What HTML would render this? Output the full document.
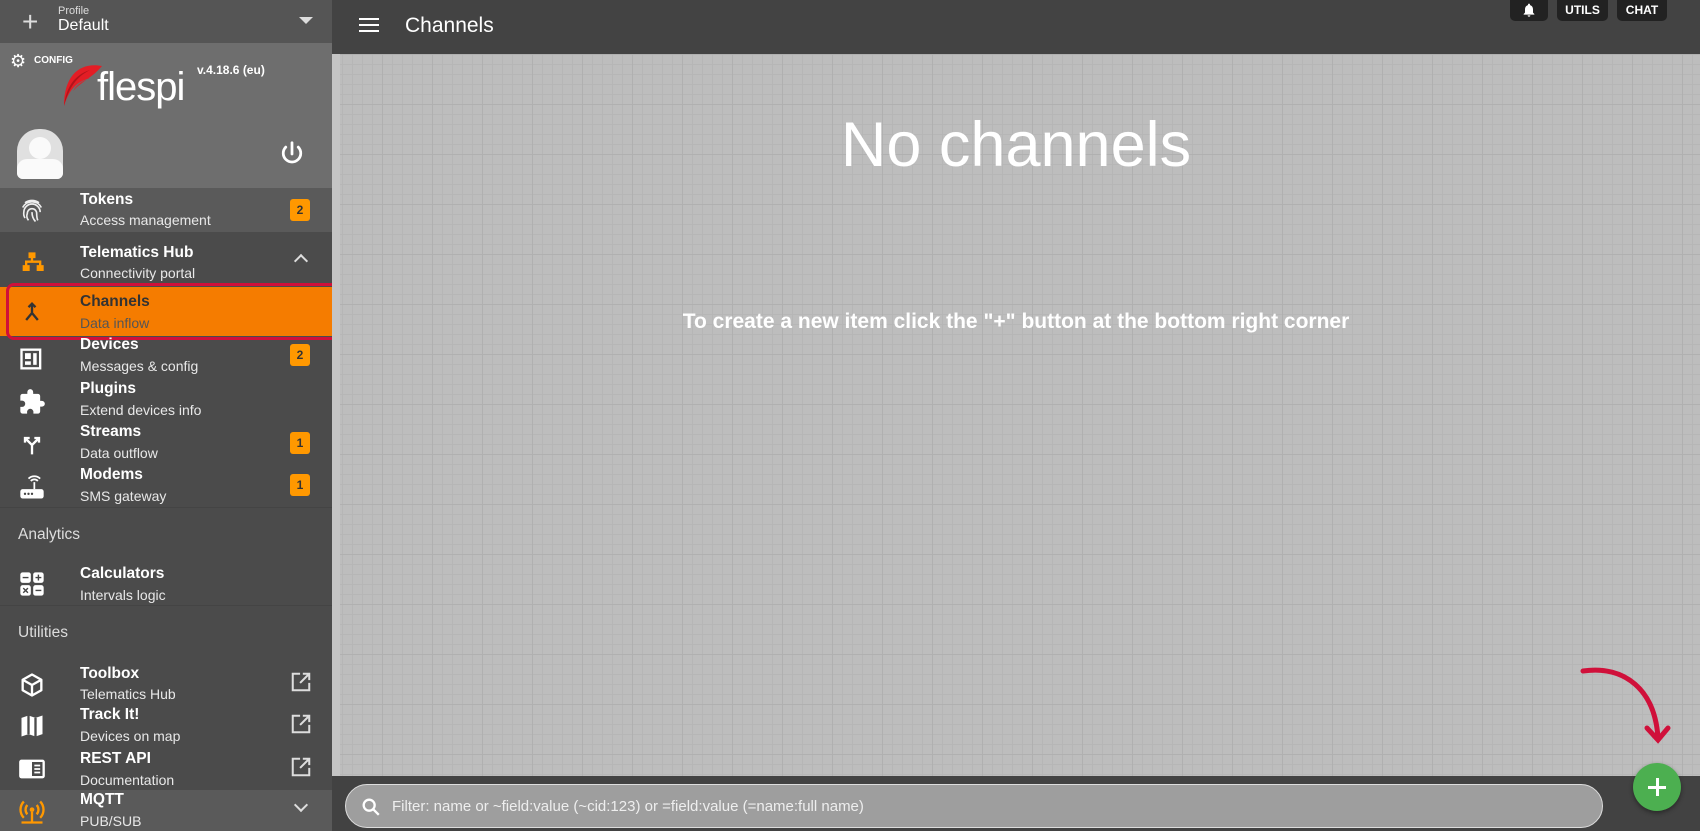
<!DOCTYPE html>
<html><head><meta charset="utf-8"><style>
*{box-sizing:border-box;margin:0;padding:0}
body{width:1700px;height:831px;overflow:hidden;font-family:"Liberation Sans",sans-serif;background:#bdbdbd;position:relative;color:#fff}
.side{position:absolute;left:0;top:0;width:332px;height:831px;background:#4b4b4b}
.scroll{position:absolute;left:332px;top:54px;width:8px;height:722px;background:#c4c4c4}
.main{position:absolute;left:332px;top:54px;width:1368px;height:722px;
background-color:#bdbdbd;
background-image:linear-gradient(#b0b0b0 1px,transparent 1px),linear-gradient(90deg,#b0b0b0 1px,transparent 1px),linear-gradient(#b6b6b6 1px,transparent 1px),linear-gradient(90deg,#b6b6b6 1px,transparent 1px);
background-size:50px 50px,50px 50px,10px 10px,10px 10px}
.top{position:absolute;left:332px;top:0;width:1368px;height:54px;background:#434343}
.row{position:absolute;left:0;width:332px}
.row .t{position:absolute;left:80px;font-weight:bold;font-size:15.5px}
.row .s{position:absolute;left:80px;font-size:14px;color:#e8e8e8}
.row .ic{position:absolute;left:18px;width:28px;height:28px}
.badge{position:absolute;left:290px;width:20px;height:22px;background:#ff9800;border-radius:3px;color:#333;font-size:12px;font-weight:bold;text-align:center;line-height:22px}
.hdr{position:absolute;left:18px;font-size:15.5px;color:#ddd}
.btn{position:absolute;top:0;height:21px;background:#222;border-radius:0 0 5px 5px;font-size:12px;font-weight:bold;text-align:center;line-height:20px}
</style></head><body>
<div class="side">
 <div style="position:absolute;left:0;top:0;width:332px;height:43px;background:#555">
  <div style="position:absolute;left:22px;top:6px;font-size:28px;color:#ddd;font-weight:300">+</div>
  <div style="position:absolute;left:58px;top:5px;font-size:11px;color:#ddd">Profile</div>
  <div style="position:absolute;left:58px;top:17px;font-size:16px">Default</div>
  <div style="position:absolute;left:299px;top:17px;border-left:7px solid transparent;border-right:7px solid transparent;border-top:7px solid #ddd"></div>
 </div>
 <div style="position:absolute;left:0;top:43px;width:332px;height:145px;background:#6e6e6e">
  <div style="position:absolute;left:10px;top:8px;font-size:18px">⚙</div>
  <div style="position:absolute;left:34px;top:12px;font-size:10px;font-weight:bold">CONFIG</div>
  <svg style="position:absolute;left:60px;top:20px" width="42" height="45" viewBox="0 0 42 45"><path d="M42 3C22-1 4 10 4 43 9 27 16 19 30 15 20 19 16 23 13 28 22 18 32 15 42 3Z" fill="#e31d25"/><path d="M4 43C6 25 14 12 30 7 16 14 9 25 4 43Z" fill="#b0141b"/></svg>
  <div style="position:absolute;left:97px;top:22px;font-size:40px;letter-spacing:-1px">flespi</div>
  <div style="position:absolute;left:197px;top:20px;font-size:12px;font-weight:bold">v.4.18.6 (eu)</div>
  <div style="position:absolute;left:17px;top:86px;width:46px;height:50px;border-radius:22px 22px 6px 6px;background:#e0e0e0;overflow:hidden">
   <div style="position:absolute;left:12px;top:8px;width:22px;height:22px;border-radius:50%;background:#fafafa"></div>
   <div style="position:absolute;left:0;top:30px;width:46px;height:20px;border-radius:10px 10px 4px 4px;background:#fafafa"></div></div>
  <svg style="position:absolute;left:277px;top:96px" width="30" height="30" viewBox="0 0 24 24"><path d="M12 3v9M7 6.5a7 7 0 1 0 10 0" stroke="#fff" stroke-width="2.2" fill="none" stroke-linecap="round"/></svg>
 </div>
 <div class="row" style="top:188px;height:44px;background:#5a5a5a">
  <svg class="ic" style="top:9px" viewBox="0 0 24 24" fill="none" stroke="#eee" stroke-width="1.4"><path d="M4 9a9 9 0 0 1 16 0M6 18a7 7 0 0 1-1-5 7 7 0 0 1 14 0M9 20a6 6 0 0 1-1-6 4 4 0 0 1 8 0c0 2 0 4 1 6M12 13c0 3 1 6 3 8M6 5a10 10 0 0 1 12 0"/></svg>
  <div class="t" style="top:3px">Tokens</div><div class="s" style="top:24px">Access management</div>
  <div class="badge" style="top:11px">2</div></div>
 <div class="row" style="top:232px;height:52px;background:#4b4b4b">
  <svg class="ic" style="top:18px" viewBox="0 0 24 24"><path d="M9 2h6v5h-2v2h7v4h2v5h-6v-5h2v-2H8v2h2v5H4v-5h2v-4h5V7H9z" fill="#ff9800"/></svg>
  <div class="t" style="top:12px">Telematics Hub</div><div class="s" style="top:33px">Connectivity portal</div>
  <div style="position:absolute;left:296px;top:24px;width:10px;height:10px;border-left:2px solid #ddd;border-top:2px solid #ddd;transform:rotate(45deg)"></div></div>
 <div class="row" style="top:287px;height:49px;background:#f57c00">
  <svg class="ic" style="top:12px" viewBox="0 0 24 24"><path d="M12 4v8l-5 6M12 12l5 6M9 7l3-3 3 3" stroke="#333" stroke-width="2" fill="none"/></svg>
  <div class="t" style="top:6px;color:#333">Channels</div><div class="s" style="top:28px;color:#555">Data inflow</div></div>
 <div style="position:absolute;left:6px;top:283px;width:335px;height:57px;border:3px solid #d0103a;border-radius:8px"></div>
 <div class="row" style="top:336px;height:44px">
  <svg class="ic" style="top:9px" viewBox="0 0 24 24"><rect x="3" y="4" width="16" height="16" fill="none" stroke="#fff" stroke-width="2"/><rect x="6" y="7" width="5" height="5" fill="#fff"/><rect x="13" y="7" width="3" height="10" fill="#fff"/><rect x="6" y="14" width="5" height="3" fill="#fff"/></svg>
  <div class="t" style="top:0">Devices</div><div class="s" style="top:22px">Messages &amp; config</div>
  <div class="badge" style="top:8px">2</div></div>
 <div class="row" style="top:380px;height:43px">
  <svg class="ic" style="top:8px" viewBox="0 0 24 24"><path d="M20.5 11H19V7a2 2 0 0 0-2-2h-4V3.5a2.5 2.5 0 0 0-5 0V5H4a2 2 0 0 0-2 2v3.8h1.5a2.7 2.7 0 0 1 0 5.4H2V20a2 2 0 0 0 2 2h3.8v-1.5a2.7 2.7 0 0 1 5.4 0V22H17a2 2 0 0 0 2-2v-4h1.5a2.5 2.5 0 0 0 0-5z" fill="#fff"/></svg>
  <div class="t" style="top:0">Plugins</div><div class="s" style="top:22px">Extend devices info</div></div>
 <div class="row" style="top:423px;height:43px">
  <svg class="ic" style="top:8px" viewBox="0 0 24 24"><path d="M12 20v-8L6 6M12 12l6-6M6 10V6h4M14 6h4v4" stroke="#fff" stroke-width="2" fill="none"/></svg>
  <div class="t" style="top:0">Streams</div><div class="s" style="top:22px">Data outflow</div>
  <div class="badge" style="top:9px">1</div></div>
 <div class="row" style="top:466px;height:42px;border-bottom:1px solid #444">
  <svg class="ic" style="top:8px" viewBox="0 0 24 24"><rect x="2" y="13" width="20" height="8" rx="2" fill="#fff"/><path d="M14 13V7M11 6a4 4 0 0 1 6 0M9 4a7 7 0 0 1 10 0" stroke="#fff" stroke-width="1.5" fill="none"/><circle cx="6" cy="17" r="1" fill="#444"/><circle cx="9" cy="17" r="1" fill="#444"/><circle cx="12" cy="17" r="1" fill="#444"/></svg>
  <div class="t" style="top:0">Modems</div><div class="s" style="top:22px">SMS gateway</div>
  <div class="badge" style="top:8px">1</div></div>
 <div class="hdr" style="top:526px">Analytics</div>
 <div class="row" style="top:562px;height:44px;border-bottom:1px solid #444">
  <svg class="ic" style="top:8px" viewBox="0 0 24 24"><g fill="#fff"><rect x="2" y="2" width="9" height="9" rx="2"/><rect x="13" y="2" width="9" height="9" rx="2"/><rect x="2" y="13" width="9" height="9" rx="2"/><rect x="13" y="13" width="9" height="9" rx="2"/></g><path d="M4 6.5h5M15 6.5h5M17.5 4v5M15 17.5h5M4.5 15.5l4 4M8.5 15.5l-4 4" stroke="#444" stroke-width="1.2"/></svg>
  <div class="t" style="top:3px">Calculators</div><div class="s" style="top:25px">Intervals logic</div></div>
 <div class="hdr" style="top:624px">Utilities</div>
 <div class="row" style="top:661px;height:44px">
  <svg class="ic" style="top:10px" viewBox="0 0 24 24"><path d="M12 3l8 4.5v9L12 21l-8-4.5v-9zM4 7.5l8 4.5 8-4.5M12 12v9" stroke="#fff" stroke-width="2" fill="none" stroke-linejoin="round"/></svg>
  <div class="t" style="top:4px">Toolbox</div><div class="s" style="top:25px">Telematics Hub</div>
  <svg style="position:absolute;left:290px;top:10px" width="22" height="22" viewBox="0 0 24 24"><path d="M11 3H3v18h18v-8M14 3h7v7M21 3l-10 10" stroke="#ddd" stroke-width="2.2" fill="none"/></svg></div>
 <div class="row" style="top:705px;height:43px">
  <svg class="ic" style="top:7px" viewBox="0 0 24 24"><path d="M3 5l6-2 6 2 6-2v16l-6 2-6-2-6 2z" fill="#fff"/><path d="M9 3v16M15 5v16" stroke="#4b4b4b" stroke-width="2"/></svg>
  <div class="t" style="top:1px">Track It!</div><div class="s" style="top:23px">Devices on map</div>
  <svg style="position:absolute;left:290px;top:8px" width="22" height="22" viewBox="0 0 24 24"><path d="M11 3H3v18h18v-8M14 3h7v7M21 3l-10 10" stroke="#ddd" stroke-width="2.2" fill="none"/></svg></div>
 <div class="row" style="top:748px;height:42px">
  <svg class="ic" style="top:7px" viewBox="0 0 24 24"><rect x="1" y="4" width="22" height="16" rx="2" fill="#fff"/><rect x="12" y="6" width="9" height="12" fill="#4b4b4b"/><path d="M14 9h5M14 12h5M14 15h5" stroke="#fff" stroke-width="1.5"/></svg>
  <div class="t" style="top:2px">REST API</div><div class="s" style="top:24px">Documentation</div>
  <svg style="position:absolute;left:290px;top:8px" width="22" height="22" viewBox="0 0 24 24"><path d="M11 3H3v18h18v-8M14 3h7v7M21 3l-10 10" stroke="#ddd" stroke-width="2.2" fill="none"/></svg></div>
 <div class="row" style="top:790px;height:41px;background:#5a5a5a">
  <svg class="ic" style="top:8px" viewBox="0 0 24 24"><circle cx="12" cy="10" r="2" fill="#ff9800"/><path d="M8 6a6 6 0 0 0 0 8M16 6a6 6 0 0 1 0 8M5 3a10 10 0 0 0 0 14M19 3a10 10 0 0 1 0 14M12 12v10M3 21h18" stroke="#ff9800" stroke-width="2" fill="none"/></svg>
  <div class="t" style="top:1px">MQTT</div><div class="s" style="top:23px">PUB/SUB</div>
  <div style="position:absolute;left:296px;top:10px;width:10px;height:10px;border-right:2px solid #ddd;border-bottom:2px solid #ddd;transform:rotate(45deg)"></div></div>
</div>
<div class="top">
 <div style="position:absolute;left:27px;top:18px;width:20px;height:2px;background:#fff;box-shadow:0 6px #fff,0 12px #fff"></div>
 <div style="position:absolute;left:73px;top:14px;font-size:21px">Channels</div>
 <div class="btn" style="left:1178px;width:38px"><svg width="16" height="16" viewBox="0 0 24 24" style="margin-top:2px"><path d="M12 22a2 2 0 0 0 2-2h-4a2 2 0 0 0 2 2zm6-6V11c0-3-1.6-5.6-4.5-6.3V4a1.5 1.5 0 0 0-3 0v.7C7.6 5.4 6 8 6 11v5l-2 2v1h16v-1z" fill="#fff"/></svg></div>
 <div class="btn" style="left:1225px;width:51px">UTILS</div>
 <div class="btn" style="left:1285px;width:50px">CHAT</div>
</div>
<div class="main">
 <div style="position:absolute;left:0;width:1368px;top:55px;text-align:center;font-size:63px;font-weight:300">No channels</div>
 <div style="position:absolute;left:0;width:1368px;top:256px;text-align:center;font-size:21px;font-weight:bold">To create a new item click the "+" button at the bottom right corner</div>
</div>
<div class="scroll"></div>
<svg style="position:absolute;left:1575px;top:660px" width="100" height="95" viewBox="0 0 100 95"><path d="M8 11C50 5 80 30 83 78M72 68l11 12 10-12" stroke="#d0103a" stroke-width="5" fill="none" stroke-linecap="round"/></svg>
<div style="position:absolute;left:332px;top:776px;width:1368px;height:55px;background:#424242">
 <div style="position:absolute;left:13px;top:8px;width:1258px;height:44px;border-radius:22px;background:#9e9e9e;border:1px solid #ddd">
  <svg style="position:absolute;left:14px;top:11px" width="22" height="22" viewBox="0 0 24 24"><circle cx="10" cy="10" r="6" stroke="#fff" stroke-width="2.5" fill="none"/><path d="M14.5 14.5l6 6" stroke="#fff" stroke-width="2.5"/></svg>
  <div style="position:absolute;left:46px;top:13px;font-size:15px;color:#eee">Filter: name or ~field:value (~cid:123) or =field:value (=name:full name)</div></div>
</div>
<div style="position:absolute;left:1633px;top:763px;width:48px;height:48px;border-radius:50%;background:#4caf50;box-shadow:0 2px 5px rgba(0,0,0,.4)">
 <div style="position:absolute;left:15px;top:23px;width:18px;height:2.5px;background:#fff"></div>
 <div style="position:absolute;left:23px;top:15px;width:2.5px;height:18px;background:#fff"></div></div>
</body></html>
